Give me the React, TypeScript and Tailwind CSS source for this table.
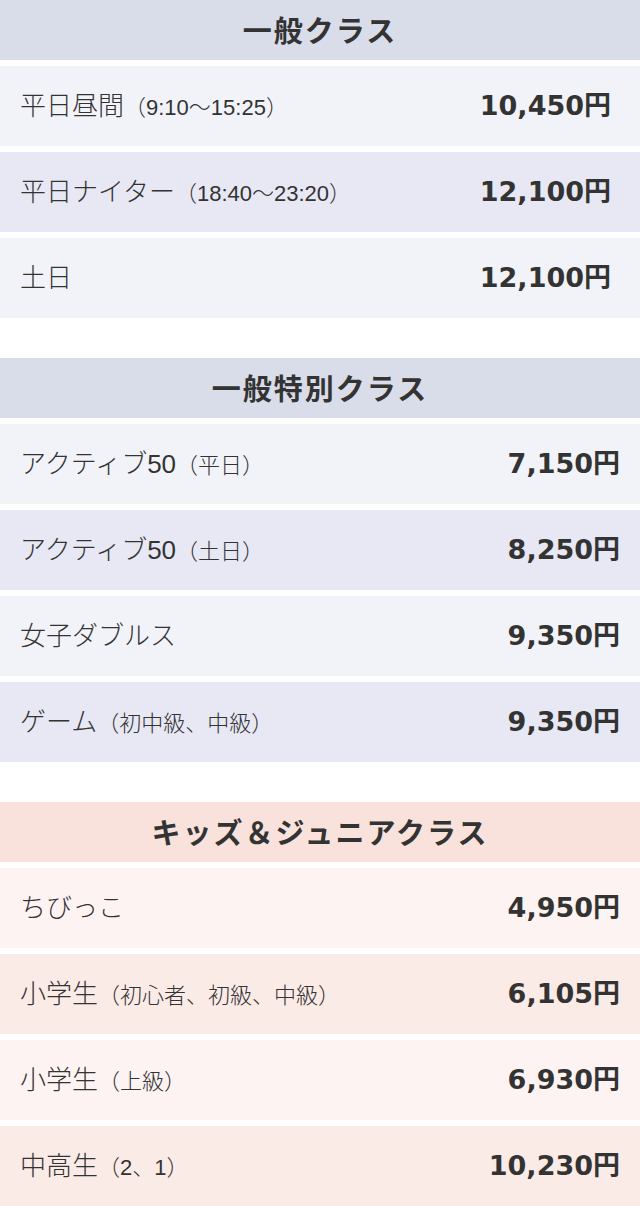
const sections = [
  {
    title: '一般クラス',
    head: 'bg-[#d9dde9]',
    odd: 'bg-[#f2f3f8]',
    even: 'bg-[#e7e8f3]',
    pr: 'pr-[29px]',
    rows: [
      { name: '平日昼間', note: '（9:10〜15:25）', price: '10,450円' },
      { name: '平日ナイター', note: '（18:40〜23:20）', price: '12,100円' },
      { name: '土日', note: '', price: '12,100円' },
    ],
  },
  {
    title: '一般特別クラス',
    head: 'bg-[#d9dde9]',
    odd: 'bg-[#f2f3f8]',
    even: 'bg-[#e7e8f3]',
    pr: 'pr-[20px]',
    rows: [
      { name: 'アクティブ50', note: '（平日）', price: '7,150円' },
      { name: 'アクティブ50', note: '（土日）', price: '8,250円' },
      { name: '女子ダブルス', note: '', price: '9,350円' },
      { name: 'ゲーム', note: '（初中級、中級）', price: '9,350円' },
    ],
  },
  {
    title: 'キッズ＆ジュニアクラス',
    head: 'bg-[#f9e2dc]',
    odd: 'bg-[#fdf3f2]',
    even: 'bg-[#fbebe7]',
    pr: 'pr-[20px]',
    rows: [
      { name: 'ちびっこ', note: '', price: '4,950円' },
      { name: '小学生', note: '（初心者、初級、中級）', price: '6,105円' },
      { name: '小学生', note: '（上級）', price: '6,930円' },
      { name: '中高生', note: '（2、1）', price: '10,230円' },
    ],
  },
]

export default function App() {
  return (
    <div
      className="w-[640px] bg-white text-[#333] flex flex-col gap-10"
      style={{ fontFamily: '"Liberation Sans", "Noto Sans CJK JP", sans-serif' }}
    >
      {sections.map((s) => (
        <section key={s.title} className="flex flex-col gap-[6px]">
          <h2
            className={`${s.head} h-[60px] flex items-center justify-center text-[29px] font-bold tracking-[2px]`}
            style={{ fontFamily: '"Noto Sans CJK JP", sans-serif' }}
          >
            {s.title}
          </h2>
          {s.rows.map((r, i) => (
            <div
              key={i}
              className={`${i % 2 === 0 ? s.odd : s.even} h-[80px] flex items-center justify-between pl-5 ${s.pr}`}
            >
              <div className="flex items-baseline">
                <span className="text-[26px] font-light">{r.name}</span>
                {r.note && <span className="text-[22px] font-light">{r.note}</span>}
              </div>
              <span
                className="text-[27px] font-bold"
                style={{ fontFamily: '"DejaVu Sans", "Noto Sans CJK JP", sans-serif' }}
              >
                {r.price}
              </span>
            </div>
          ))}
        </section>
      ))}
    </div>
  )
}
